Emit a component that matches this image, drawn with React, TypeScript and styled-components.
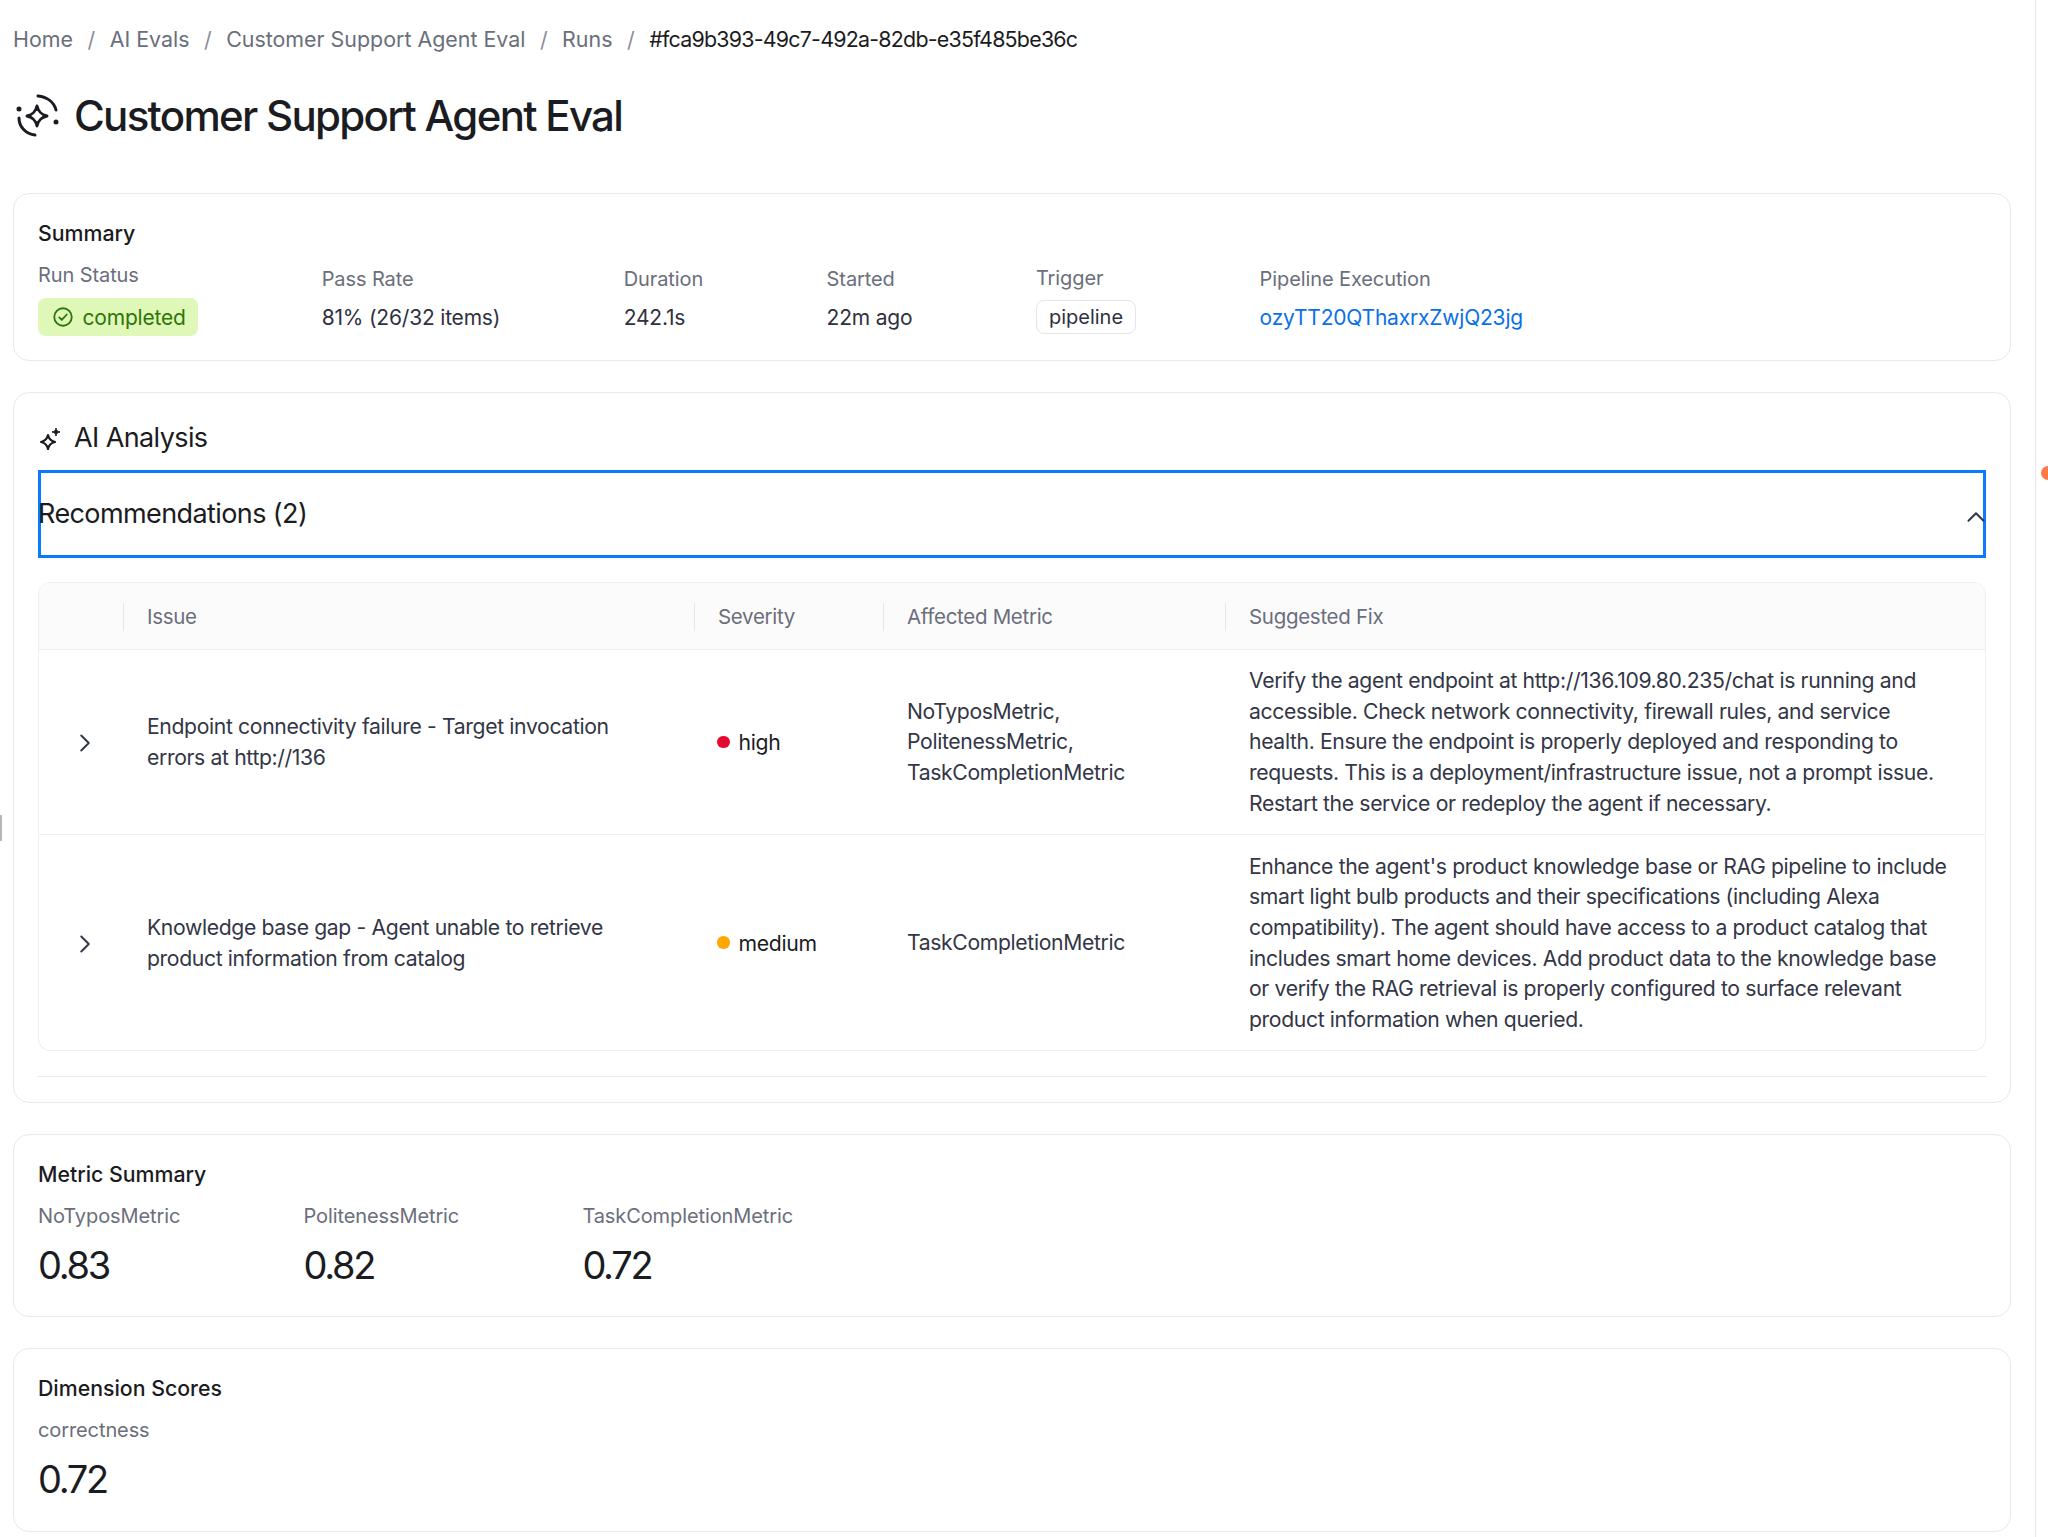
import React from "react";
import styled, { createGlobalStyle } from "styled-components";
import { ChevronRight, ChevronUp } from "lucide-react";

const GlobalStyle = createGlobalStyle`
  html, body {
    margin: 0;
    padding: 0;
    background: #fff;
    font-family: Inter, "Noto Sans", sans-serif;
    color: #1b1c22;
  }
`;

const Page = styled.div`
  position: relative;
  width: 2048px;
  height: 1537px;
  overflow: hidden;
  box-sizing: border-box;
  padding: 0 37px 0 13px;
`;

const EdgeLine = styled.div`
  position: absolute;
  top: 0;
  bottom: 0;
  left: 2035px;
  width: 1px;
  background: #e8e8ea;
`;

const EdgeDot = styled.div`
  position: absolute;
  left: 2041px;
  top: 466px;
  width: 14px;
  height: 14px;
  border-radius: 50%;
  background: #ff7a45;
`;

const EdgeHandle = styled.div`
  position: absolute;
  left: 0;
  top: 815px;
  width: 2px;
  height: 26px;
  background: #b5b5b8;
`;

const Breadcrumbs = styled.nav`
  display: flex;
  align-items: center;
  height: 30px;
  padding-top: 24px;
  font-size: 21.4px;
  line-height: 30px;
  color: #6b6e7b;
`;

const Crumb = styled.span<{ $current?: boolean }>`
  color: ${(p) => (p.$current ? "#1b1c22" : "#6b6e7b")};
  letter-spacing: ${(p) => (p.$current ? "-0.76px" : "0")};
`;

const Slash = styled.span`
  margin: 0 14.5px;
  color: #8b8d97;
`;

const TitleRow = styled.div`
  display: flex;
  align-items: center;
  gap: 13px;
  height: 60px;
  margin-top: 32px;
  margin-bottom: 47px;
`;

const Title = styled.h1`
  margin: 0;
  font-size: 42px;
  line-height: 60px;
  font-weight: 500;
  letter-spacing: -1.7px;
  color: #1b1c22;
`;

const Card = styled.section<{ $height: number }>`
  box-sizing: border-box;
  height: ${(p) => p.$height}px;
  margin-bottom: 31px;
  padding: 24px 24px 0;
  border: 1.5px solid #e9e9eb;
  border-radius: 16px;
  background: #fff;
`;

const CardTitle = styled.h2`
  margin: 0 0 12px;
  font-size: 21.3px;
  line-height: 30px;
  font-weight: 500;
  color: #1b1c22;
`;

const SummaryRow = styled.div`
  display: flex;
  align-items: center;
  gap: 123.5px;
`;

const Stat = styled.div`
  display: flex;
  flex-direction: column;
  align-items: flex-start;
`;

const Label = styled.div`
  font-size: 20px;
  line-height: 30px;
  letter-spacing: -0.1px;
  color: #6b6e7b;
  white-space: nowrap;
`;

const Value = styled.div`
  margin-top: 9px;
  font-size: 21px;
  line-height: 30px;
  letter-spacing: -0.2px;
  color: #2f3140;
  white-space: nowrap;
`;

const StatusBadge = styled.div`
  display: inline-flex;
  align-items: center;
  gap: 10px;
  height: 38px;
  margin-top: 8px;
  padding: 0 12.5px 0 14.5px;
  border-radius: 8px;
  background: #dff8b8;
  color: #2f7409;
  font-size: 21px;
  letter-spacing: -0.2px;
`;

const TriggerBadge = styled.div`
  display: inline-flex;
  align-items: center;
  height: 32px;
  margin-top: 7px;
  padding: 0 12px;
  border: 1px solid #e5e5e8;
  border-radius: 8px;
  background: #fff;
  font-size: 20px;
  color: #2f3140;
`;

const PipelineLink = styled.a`
  color: #0a70e8;
  text-decoration: none;
`;

const AnalysisHeading = styled.div`
  display: flex;
  align-items: center;
  gap: 12px;
  height: 40px;
  margin-top: 1px;
  margin-bottom: 12px;
  font-size: 27px;
  line-height: 40px;
  font-weight: 400;
  letter-spacing: -0.6px;
  color: #1b1c22;
`;

const AccordionHead = styled.button`
  box-sizing: border-box;
  display: flex;
  align-items: center;
  justify-content: space-between;
  width: 100%;
  height: 88px;
  padding: 0;
  border: 3px solid #0a7aff;
  background: #fff;
  font-family: inherit;
  font-size: 27px;
  letter-spacing: -0.6px;
  color: #1b1c22;
  text-align: left;
`;

const AccordionLabel = styled.span`
  margin-left: -3px;
  margin-top: -2px;
`;

const ChevronWrap = styled.span`
  display: flex;
  margin-top: 6px;
  margin-right: -8px;
  color: #34374a;
`;

const TableBox = styled.div`
  margin-top: 24px;
  border: 1px solid #eeeeef;
  border-radius: 12px;
  overflow: hidden;
`;

const columns = "84px 571px 189px 342px 1fr";

const HeaderRow = styled.div`
  box-sizing: border-box;
  display: grid;
  grid-template-columns: ${columns};
  align-items: center;
  height: 66.5px;
  padding-top: 2px;
  background: #fbfbfb;
  border-bottom: 1.5px solid #eeeeef;
`;

const HeaderCell = styled.div<{ $divider?: boolean }>`
  height: 28px;
  padding-left: 23px;
  border-left: ${(p) => (p.$divider ? "1.5px solid #e6e6e8" : "none")};
  font-size: 20.5px;
  line-height: 28px;
  letter-spacing: -0.3px;
  color: #6b6e7b;
`;

const Row = styled.div<{ $last?: boolean }>`
  display: grid;
  grid-template-columns: ${columns};
  align-items: center;
  padding: 15.5px 0;
  border-bottom: ${(p) => (p.$last ? "none" : "1px solid #f0f0f1")};
`;

const Cell = styled.div`
  padding: 0 24px;
  font-size: 21.2px;
  line-height: 30.7px;
  letter-spacing: -0.37px;
  color: #333646;
`;

const ExpandCell = styled.div`
  display: flex;
  justify-content: center;
  padding: 2px 0 0 8px;
  color: #34374a;
`;

const Severity = styled.div`
  display: flex;
  align-items: center;
  gap: 9px;
  padding: 0 23px;
  font-size: 21.2px;
  letter-spacing: -0.3px;
  color: #1b1c22;
`;

const SeverityDot = styled.span<{ $color: string }>`
  width: 12.5px;
  height: 12.5px;
  border-radius: 50%;
  background: ${(p) => p.$color};
`;

const Divider = styled.div`
  height: 1px;
  margin-top: 25px;
  background: #e9e9eb;
`;

const MetricRow = styled.div`
  display: flex;
  gap: 123.2px;
`;

const BigValue = styled.div`
  margin-top: 11px;
  font-size: 38px;
  line-height: 46px;
  letter-spacing: -2.3px;
  color: #1b1c22;
`;

const AgentIcon = () => (
  <svg width="48" height="48" viewBox="0 0 48 48" fill="none" stroke="#1b1c22" strokeLinecap="round">
    <path d="M25 4c9 1 16 6 18 14" strokeWidth="3" />
    <path d="M6 26c0 9 7 16 16 17" strokeWidth="3" />
    <path
      d="M24 14c1.500 6 4 8.500 10 10-6 1.500-8.500 4-10 10-1.500-6-4-8.500-10-10 6-1.500 8.500-4 10-10z"
      strokeWidth="3"
      strokeLinejoin="round"
    />
    <path d="M6 17v.1M43 30v.1" strokeWidth="5" />
  </svg>
);

const SparkleIcon = () => (
  <svg width="24" height="24" viewBox="0 0 24 24" fill="none" stroke="#1b1c22" strokeWidth="2.200" strokeLinejoin="round">
    <path d="M10 9c.8 4 2.500 6 7 7-4.500 1-6.200 3-7 7-.8-4-2.500-6-7-7 4.500-1 6.200-3 7-7z" />
    <path d="M18 2c.4 2.500 1.200 3.400 4 4-2.800.6-3.600 1.500-4 4-.4-2.500-1.200-3.400-4-4 2.800-.6 3.600-1.500 4-4z" fill="#1b1c22" strokeWidth="1" />
  </svg>
);

const CheckIcon = () => (
  <svg width="20" height="20" viewBox="0 0 24 24" fill="none" stroke="#2f7409" strokeWidth="2.200" strokeLinecap="round" strokeLinejoin="round">
    <circle cx="12" cy="12" r="10.500" />
    <path d="M7.500 12.500l3 3 6-6.500" />
  </svg>
);

const recommendations = [
  {
    issue: "Endpoint connectivity failure - Target invocation errors at http://136",
    severity: "high",
    color: "#e5092f",
    metric: ["NoTyposMetric,", "PolitenessMetric,", "TaskCompletionMetric"],
    fix: "Verify the agent endpoint at http://136.109.80.235/chat is running and accessible. Check network connectivity, firewall rules, and service health. Ensure the endpoint is properly deployed and responding to requests. This is a deployment/infrastructure issue, not a prompt issue. Restart the service or redeploy the agent if necessary.",
  },
  {
    issue: "Knowledge base gap - Agent unable to retrieve product information from catalog",
    severity: "medium",
    color: "#ffa800",
    metric: ["TaskCompletionMetric"],
    fix: "Enhance the agent's product knowledge base or RAG pipeline to include smart light bulb products and their specifications (including Alexa compatibility). The agent should have access to a product catalog that includes smart home devices. Add product data to the knowledge base or verify the RAG retrieval is properly configured to surface relevant product information when queried.",
  },
];

export default function App() {
  return (
    <Page>
      <GlobalStyle />
      <EdgeLine />
      <EdgeDot />
      <EdgeHandle />

      <Breadcrumbs>
        <Crumb>Home</Crumb>
        <Slash>/</Slash>
        <Crumb>AI Evals</Crumb>
        <Slash>/</Slash>
        <Crumb>Customer Support Agent Eval</Crumb>
        <Slash>/</Slash>
        <Crumb>Runs</Crumb>
        <Slash>/</Slash>
        <Crumb $current>#fca9b393-49c7-492a-82db-e35f485be36c</Crumb>
      </Breadcrumbs>

      <TitleRow>
        <AgentIcon />
        <Title>Customer Support Agent Eval</Title>
      </TitleRow>

      <Card $height={168}>
        <CardTitle>Summary</CardTitle>
        <SummaryRow>
          <Stat>
            <Label>Run Status</Label>
            <StatusBadge>
              <CheckIcon />
              completed
            </StatusBadge>
          </Stat>
          <Stat>
            <Label>Pass Rate</Label>
            <Value>81% (26/32 items)</Value>
          </Stat>
          <Stat>
            <Label>Duration</Label>
            <Value>242.1s</Value>
          </Stat>
          <Stat>
            <Label>Started</Label>
            <Value>22m ago</Value>
          </Stat>
          <Stat>
            <Label>Trigger</Label>
            <TriggerBadge>pipeline</TriggerBadge>
          </Stat>
          <Stat>
            <Label>Pipeline Execution</Label>
            <Value>
              <PipelineLink>ozyTT20QThaxrxZwjQ23jg</PipelineLink>
            </Value>
          </Stat>
        </SummaryRow>
      </Card>

      <Card $height={710.5}>
        <AnalysisHeading>
          <SparkleIcon />
          AI Analysis
        </AnalysisHeading>
        <AccordionHead>
          <AccordionLabel>Recommendations (2)</AccordionLabel>
          <ChevronWrap>
            <ChevronUp size={30} strokeWidth={1.6} />
          </ChevronWrap>
        </AccordionHead>
        <TableBox>
          <HeaderRow>
            <HeaderCell />
            <HeaderCell $divider>Issue</HeaderCell>
            <HeaderCell $divider>Severity</HeaderCell>
            <HeaderCell $divider>Affected Metric</HeaderCell>
            <HeaderCell $divider>Suggested Fix</HeaderCell>
          </HeaderRow>
          {recommendations.map((r, i) => (
            <Row key={r.severity} $last={i === recommendations.length - 1}>
              <ExpandCell>
                <ChevronRight size={30} strokeWidth={1.6} />
              </ExpandCell>
              <Cell>{r.issue}</Cell>
              <Severity>
                <SeverityDot $color={r.color} />
                {r.severity}
              </Severity>
              <Cell>
                {r.metric.map((m) => (
                  <div key={m}>{m}</div>
                ))}
              </Cell>
              <Cell>{r.fix}</Cell>
            </Row>
          ))}
        </TableBox>
        <Divider />
      </Card>

      <Card $height={183.5}>
        <CardTitle>Metric Summary</CardTitle>
        <MetricRow>
          <Stat>
            <Label>NoTyposMetric</Label>
            <BigValue>0.83</BigValue>
          </Stat>
          <Stat>
            <Label>PolitenessMetric</Label>
            <BigValue>0.82</BigValue>
          </Stat>
          <Stat>
            <Label>TaskCompletionMetric</Label>
            <BigValue>0.72</BigValue>
          </Stat>
        </MetricRow>
      </Card>

      <Card $height={184}>
        <CardTitle>Dimension Scores</CardTitle>
        <Stat>
          <Label>correctness</Label>
          <BigValue>0.72</BigValue>
        </Stat>
      </Card>
    </Page>
  );
}
